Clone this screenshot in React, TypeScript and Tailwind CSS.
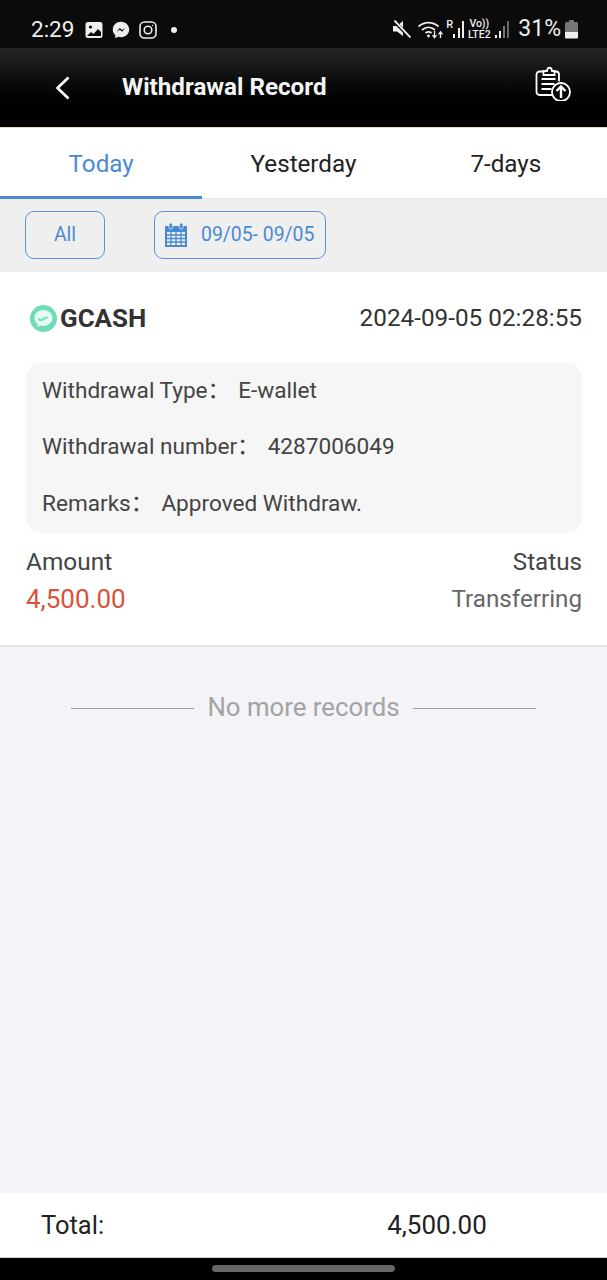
function StatusIcons() {
  return (
    <div className="flex items-center">
      {/* muted speaker */}
      <svg width="18" height="18" viewBox="0 0 18 18" className="-mt-[2px]">
        <path d="M0 6h4l6-5v15L4 11.500H0z" fill="#eee" />
        <path d="M1 1 17 17.500" stroke="#0b0b0b" strokeWidth="3.400" />
        <path d="M1.500 .5 17.500 17.500" stroke="#eee" strokeWidth="1.900" />
      </svg>
      {/* wifi */}
      <svg width="25" height="20" viewBox="0 0 25 20" fill="none" className="ml-[7px]">
        <path d="M.5 6.500C6.500 1.200 14.500 1.200 20.500 6.500" stroke="#eee" strokeWidth="1.700" />
        <path d="M4 10C8 6.500 13 6.500 17 10" stroke="#eee" strokeWidth="1.700" />
        <path d="M7.500 13c2-1.600 4-1.600 6 0" stroke="#eee" strokeWidth="1.700" />
        <circle cx="10.500" cy="16" r="1.400" fill="#eee" />
        <path d="M16.500 11v6.500m-2-2.300 2 2.500 2-2.500" stroke="#eee" strokeWidth="1.300" />
        <path d="M22.500 18v-6m-2 2.300 2-2.500 2 2.500" stroke="#eee" strokeWidth="1.300" />
      </svg>
      <Signal label="R" />
      <div className="ml-[3px] flex w-[24px] flex-col items-center text-[10.500px] leading-[10.500px] font-medium text-[#eee]">
        <span>Vo))</span>
        <span>LTE2</span>
      </div>
      <div className="ml-[4px] flex h-[19px] items-end gap-[2px] pb-[1px]">
        <i className="h-[3px] w-[2px] bg-[#eee]" />
        <i className="h-[7px] w-[2px] bg-[#eee]" />
        <i className="h-[12px] w-[2px] bg-[#777]" />
        <i className="h-[17px] w-[2px] bg-[#666]" />
      </div>
    </div>
  );
}

function Signal({ label }: { label: string }) {
  return (
    <div className="relative ml-[3px] flex h-[19px] w-[18px] items-end justify-end gap-[2.500px] pb-[1px]">
      <span className="absolute -top-[1px] left-0 text-[11px] leading-[11px] font-medium text-[#eee]">{label}</span>
      <i className="h-[4px] w-[2px] bg-[#eee]" />
      <i className="h-[10px] w-[2px] bg-[#eee]" />
      <i className="h-[17px] w-[2px] bg-[#eee]" />
    </div>
  );
}

function FilterButton({ children, className }: { children: React.ReactNode; className: string }) {
  return (
    <div className={`flex h-[48px] items-center rounded-[9px] border border-[#5b93d3] pt-[1px] text-[19.400px] text-[#4a8ad4] ${className}`}>
      {children}
    </div>
  );
}

function InfoRow({ label, value }: { label: string; value: string }) {
  return (
    <p className="flex h-[56.500px] items-center pb-[1px] text-[22.600px] text-[#444]">
      <span>{label}：</span>
      <span className="ml-[8px]">{value}</span>
    </p>
  );
}

export default function App() {
  return (
    <div className="flex h-[1280px] w-[607px] flex-col overflow-hidden bg-[#f3f3f8] font-['Roboto','Noto_Sans_CJK_SC',sans-serif]">
      <div className="flex h-[48px] shrink-0 items-center bg-[#0b0b0b] pt-[11px] pr-[29px] pl-[31px]">
        <span className="text-[22.500px] text-[#eee]">2:29</span>
        {/* gallery */}
        <svg width="18" height="18" viewBox="0 0 18 18" className="ml-[11px]">
          <rect x="0.500" y="1" width="17" height="16" rx="2.500" fill="#eee" />
          <circle cx="5.500" cy="6" r="1.600" fill="#0b0b0b" />
          <path d="M2 15l4-4 2.500 2L13 8l3 3v4z" fill="#0b0b0b" />
        </svg>
        {/* messenger */}
        <svg width="18" height="18" viewBox="0 0 18 18" className="ml-[9px]">
          <path d="M9 .8C4.300.8.8 4.200.8 8.600c0 2.300 1 4.300 2.500 5.700v3l2.800-1.500c.9.300 1.900.4 2.900.4 4.700 0 8.200-3.400 8.200-7.600S13.700.8 9 .8z" fill="#eee" />
          <path d="M4.500 10.800 7.800 7l2.300 2 3.300-2-3.300 3.800-2.300-2z" fill="#0b0b0b" />
        </svg>
        {/* instagram */}
        <svg width="18" height="18" viewBox="0 0 18 18" fill="none" stroke="#eee" strokeWidth="1.600" className="ml-[9px]">
          <rect x="1" y="1" width="16" height="16" rx="4.500" />
          <circle cx="9" cy="9" r="3.800" />
          <circle cx="13.500" cy="4.500" r="0.700" fill="#eee" stroke="none" />
        </svg>
        <i className="ml-[14px] h-[6px] w-[6px] rounded-full bg-[#eee]" />
        <div className="ml-auto flex items-center">
          <StatusIcons />
          <span className="ml-[9px] text-[23px] text-[#eee]">31%</span>
          <svg width="13" height="19" viewBox="0 0 13 19" className="ml-[4px]">
            <path d="M4 0h5v2h2.500A1.500 1.500 0 0 1 13 3.500V18H0V3.500A1.500 1.500 0 0 1 1.500 2H4z" fill="#777" />
            <path d="M0 12h13v5.500a1 1 0 0 1-1 1H1a1 1 0 0 1-1-1z" fill="#eee" />
          </svg>
        </div>
      </div>

      <header className="flex h-[80px] shrink-0 items-center border-b border-[#e9dfae] bg-gradient-to-b from-[#262626] to-[#000] pr-[36px] pl-[55px]">
        <svg width="15" height="24" viewBox="0 0 15 24" fill="none" stroke="#fff" strokeWidth="2.600">
          <path d="M13.500 1.500 2.500 12l11 10.500" />
        </svg>
        <h1 className="ml-[52px] text-[24.200px] font-bold text-[#f4f4f4]">Withdrawal Record</h1>
        <svg width="36" height="36" viewBox="0 0 36 36" fill="none" stroke="#fff" strokeWidth="1.800" className="-mt-[10px] ml-auto">
          <path d="M17 30H4.500A3 3 0 0 1 1.500 27V9.500a3 3 0 0 1 3-3H9" />
          <path d="M19 6.500h2a3 3 0 0 1 3 3v7" />
          <path d="M8.500 10V6H12c.5-4.500 4.500-4.500 5 0h2.500v4z" />
          <path d="M6.500 14h14M6.500 19h13M6.500 24h10" strokeWidth="2" />
          <circle cx="26" cy="27" r="9" />
          <path d="M26 33V21.500m-4.500 4.500 4.500-4.500 4.500 4.500" strokeWidth="2.400" />
        </svg>
      </header>

      <nav className="grid h-[71px] shrink-0 grid-cols-3 bg-white text-[24.200px] text-[#222]">
        <div className="flex items-center justify-center border-b-[3px] border-[#4a8ad4] pt-[4px] text-[#4a8ad4]">Today</div>
        <div className="flex items-center justify-center border-b border-[#e6e6e6] pt-[4px] pb-[2px]">Yesterday</div>
        <div className="flex items-center justify-center border-b border-[#e6e6e6] pt-[4px] pb-[2px]">7-days</div>
      </nav>

      <div className="flex h-[73px] shrink-0 items-center gap-[49px] bg-[#efefef] pb-[2px] pl-[25px]">
        <FilterButton className="w-[80px] justify-center">All</FilterButton>
        <FilterButton className="w-[172px] pl-[10px]">
          <svg width="22" height="24" viewBox="0 0 22 24" className="mr-[14px] shrink-0">
            <path d="M0 3h22v21H0z" fill="#4a8ad4" />
            <rect x="4" y="0" width="3.500" height="6" rx="1.700" fill="#4a8ad4" stroke="#efefef" strokeWidth="0.800" />
            <rect x="14.500" y="0" width="3.500" height="6" rx="1.700" fill="#4a8ad4" stroke="#efefef" strokeWidth="0.800" />
            <path d="M2 9h18v13H2z" fill="#efefef" />
            <path d="M2 12h18M2 15.500h18M2 19h18M6 9v13M11 9v13M16 9v13" stroke="#4a8ad4" strokeWidth="1.300" />
          </svg>
          <span className="whitespace-nowrap">09/05- 09/05</span>
        </FilterButton>
      </div>

      <section className="h-[375px] shrink-0 border-b-2 border-[#e4e4e4] bg-white pr-[25px] pl-[26px]">
        <div className="flex h-[91px] items-center justify-between pt-[2px]">
          <div className="flex items-center pl-[4px]">
            <svg width="27" height="27" viewBox="0 0 27 27">
              <circle cx="13.500" cy="13.500" r="13.500" fill="#6fdcb8" />
              <path d="M13.500 5c-5.200 0-9 3.500-9 8 0 2.600 1.300 4.700 3.400 6.200L7.500 22l3.300-1.500c.9.200 1.800.3 2.700.3 5.200 0 9-3.500 9-7.800S18.700 5 13.500 5z" fill="#e6fbf3" />
              <path d="M8.500 13.500c1 1.600 2 2 3 1.600l6-3" fill="none" stroke="#6fdcb8" strokeWidth="1.800" />
            </svg>
            <span className="ml-[3px] text-[25.900px] font-bold text-[#333]">GCASH</span>
          </div>
          <span className="text-[24.300px] text-[#333]">2024-09-05 02:28:55</span>
        </div>
        <div className="rounded-[15px] bg-[#f6f6f6] pl-[16px]">
          <InfoRow label="Withdrawal Type" value="E-wallet" />
          <InfoRow label="Withdrawal number" value="4287006049" />
          <InfoRow label="Remarks" value="Approved Withdraw." />
        </div>
        <div className="mt-[11px] flex justify-between leading-[36px]">
          <div>
            <p className="text-[24.400px] text-[#444]">Amount</p>
            <p className="mt-[1px] text-[26px] text-[#d8533a]">4,500.00</p>
          </div>
          <div className="text-right text-[24.200px]">
            <p className="text-[#444]">Status</p>
            <p className="mt-[1px] text-[#666]">Transferring</p>
          </div>
        </div>
      </section>

      <div className="flex-1">
        <div className="mt-[41px] flex items-center justify-center gap-[13px] text-[25.800px] text-[#a3a3a3]">
          <i className="h-px w-[123px] bg-[#999]" />
          <span className="pb-[2px]">No more records</span>
          <i className="h-px w-[123px] bg-[#999]" />
        </div>
      </div>

      <footer className="flex h-[65px] shrink-0 items-center border-b border-[#ccc] bg-white text-[#222]">
        <span className="ml-[41px] text-[25.500px]">Total:</span>
        <span className="ml-[283px] text-[26px]">4,500.00</span>
      </footer>
      <div className="flex h-[22px] shrink-0 items-center justify-center bg-black pb-[1px]">
        <i className="h-[7px] w-[183px] rounded-full bg-[#666]" />
      </div>
    </div>
  );
}
